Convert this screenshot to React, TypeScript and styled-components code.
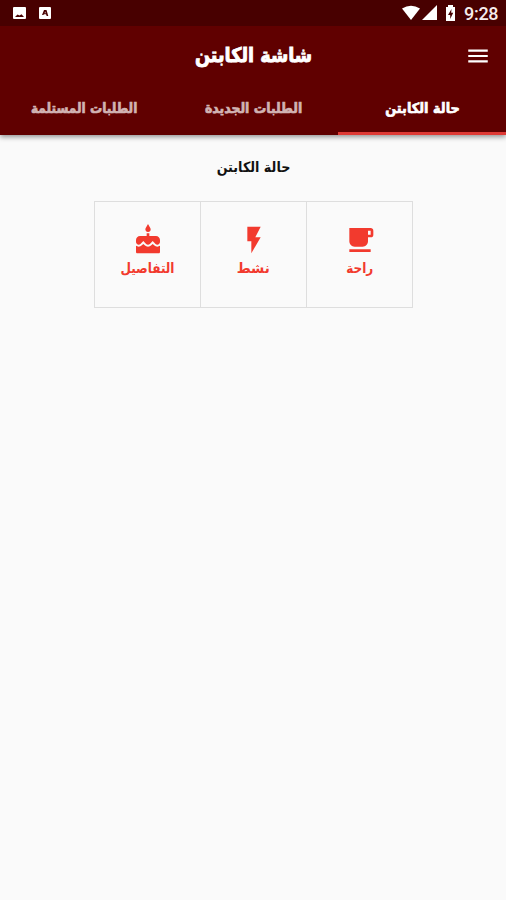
import React from 'react';
import styled, { createGlobalStyle } from 'styled-components';
import { MdCake, MdFlashOn, MdFreeBreakfast, MdMenu } from 'react-icons/md';

const GlobalStyle = createGlobalStyle`
  * { box-sizing: border-box; }
  body { margin: 0; background: #fafafa; }
`;

const Screen = styled.div`
  display: flex;
  flex-direction: column;
  width: 506px;
  height: 900px;
  background: #fafafa;
  font-family: 'DejaVu Sans', sans-serif;
  overflow: hidden;
`;

const Header = styled.header`
  flex: none;
  height: 135px;
  background: #600000;
  box-shadow: 0 2px 5px rgba(0, 0, 0, 0.42);
`;

const StatusBar = styled.div`
  display: flex;
  align-items: center;
  justify-content: space-between;
  height: 26px;
  padding: 0 8px 0 12px;
  background: #480000;
`;

const StatusGroup = styled.div<{ $gap: number }>`
  display: flex;
  align-items: center;
  gap: ${(p) => p.$gap}px;
  color: #fff;
`;

const Clock = styled.span`
  width: 34px;
  margin-left: 5px;
  padding-top: 1px;
  font: 500 18px/26px Roboto, sans-serif;
  letter-spacing: -0.3px;
  color: #f6eded;
`;

const AppBar = styled.div`
  display: grid;
  grid-template-columns: 56px 1fr 56px;
  align-items: center;
  justify-items: center;
  height: 59px;
  color: #fff;
`;

const Label = styled.span<{ $size: number; $stretch?: number; $weight?: number; $color: string }>`
  display: inline-block;
  font-size: ${(p) => p.$size}px;
  font-weight: 700;
  line-height: 1.2;
  white-space: nowrap;
  color: ${(p) => p.$color};
  -webkit-text-stroke: ${(p) => p.$weight ?? 0}px ${(p) => p.$color};
  transform: scaleX(${(p) => p.$stretch ?? 1});
`;

const Title = styled(Label)`
  margin: -2px 0 0 1px;
`;

const Tabs = styled.nav`
  display: grid;
  grid-template-columns: 168px 169px 169px;
  height: 50px;
`;

const Tab = styled.div<{ $active?: boolean }>`
  display: flex;
  justify-content: center;
  padding-top: 15px;
  border-bottom: 3px solid ${(p) => (p.$active ? '#df3a35' : 'transparent')};
`;

const Content = styled.main`
  display: flex;
  flex-direction: column;
  align-items: center;
  padding: 24px 0 0 1px;
`;

const Actions = styled.div`
  display: grid;
  grid-template-columns: 105px 106px 106px;
  height: 107px;
  margin-top: 25px;
  border: 1px solid #dedede;
`;

const Action = styled.button`
  display: flex;
  flex-direction: column;
  align-items: center;
  gap: 4px;
  padding: 22px 0 0;
  border: 0;
  background: transparent;
  color: #f23a2e;
  font-family: inherit;

  & + & {
    border-right: 1px solid #dedede;
  }
`;

const tabs = [
  { text: 'حالة الكابتن', active: true, stretch: 0.92 },
  { text: 'الطلبات الجديدة', active: false, stretch: 0.89 },
  { text: 'الطلبات المستلمة', active: false, stretch: 0.87 },
];

const actions = [
  { text: 'راحة', Icon: MdFreeBreakfast, stretch: 0.86 },
  { text: 'نشط', Icon: MdFlashOn, stretch: 0.96 },
  { text: 'التفاصيل', Icon: MdCake, stretch: 0.86 },
];

export default function App() {
  return (
    <>
      <GlobalStyle />
      <Screen>
        <Header>
          <StatusBar>
            <StatusGroup $gap={12}>
              <svg width="15" height="14" viewBox="0 0 15 14">
                <rect x="1" y="1" width="13" height="12" rx="1" fill="#fff" />
                <path d="M3 11 5.5 8.5 7.5 9.5 9.5 8.2 12 11Z" fill="#480000" />
              </svg>
              <svg width="13" height="14" viewBox="0 0 13 14">
                <rect x="0" y="1" width="12" height="12" rx="1" fill="#fff" />
                <path d="M3 9 5 4H7.5L9.3 10H7.7L7 8.3H5L4.3 9Z" fill="#480000" />
                <path d="M5.6 7.2H6.7L6.2 5.6Z" fill="#fff" />
              </svg>
            </StatusGroup>
            <StatusGroup $gap={2}>
              <svg width="18" height="16" viewBox="0 0 18 16">
                <path d="M0 3.5Q9-1.8 18 3.5L9 15Z" fill="#fff" />
              </svg>
              <svg width="16" height="16" viewBox="0 0 16 16">
                <path d="M0 15 15 0V15Z" fill="#fff" />
              </svg>
              <svg width="17" height="18" viewBox="0 0 17 18">
                <path d="M6 3H8V1H13V3H15V17H6Z" fill="#fff" />
                <path d="M11.5 5 8 11H10.2V15L13.2 8.8H11.2Z" fill="#480000" />
              </svg>
              <Clock>9:28</Clock>
            </StatusGroup>
          </StatusBar>
          <AppBar>
            <span />
            <Title $size={20} $stretch={0.88} $weight={0.9} $color="#fff">شاشة الكابتن</Title>
            <MdMenu size={26} />
          </AppBar>
          <Tabs dir="rtl">
            {tabs.map((tab) => (
              <Tab key={tab.text} $active={tab.active}>
                <Label
                  $size={14}
                  $stretch={tab.stretch}
                  $weight={0.7}
                  $color={tab.active ? '#fff' : '#d1b3b3'}
                >
                  {tab.text}
                </Label>
              </Tab>
            ))}
          </Tabs>
        </Header>
        <Content>
          <Label $size={14} $stretch={0.91} $color="#111">حالة الكابتن</Label>
          <Actions dir="rtl">
            {actions.map(({ text, Icon, stretch }) => (
              <Action key={text}>
                <Icon size={32} />
                <Label $size={14} $stretch={stretch} $color="#f23a2e">{text}</Label>
              </Action>
            ))}
          </Actions>
        </Content>
      </Screen>
    </>
  );
}
